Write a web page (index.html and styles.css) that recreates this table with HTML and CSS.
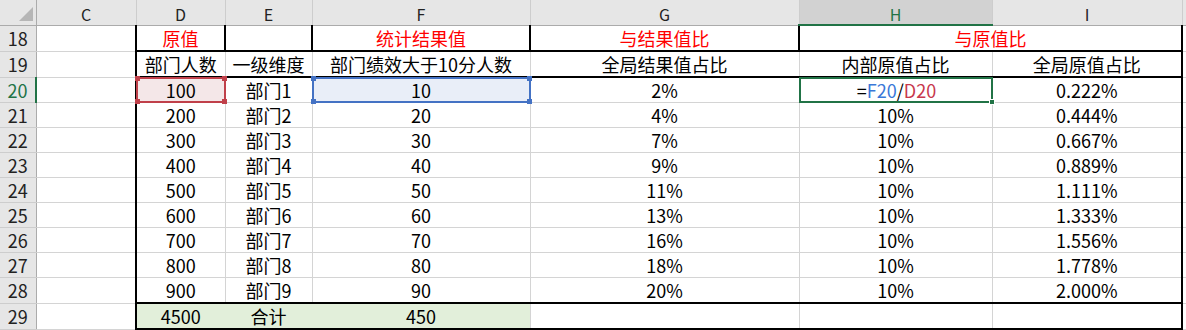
FILE: index.html
```html
<!DOCTYPE html>
<html lang="zh-CN">
<head>
<meta charset="utf-8">
<title>Sheet</title>
<link rel="stylesheet" href="styles.css">
</head>
<body>
<table class="sheet">
  <colgroup>
    <col class="c-rh"><col class="c-c"><col class="c-d"><col class="c-e"><col class="c-f"><col class="c-g"><col class="c-h"><col class="c-i"><col class="c-x">
  </colgroup>
  <thead>
    <tr class="colhdr">
      <th class="corner"><span class="tri"></span></th>
      <th>C</th><th>D</th><th>E</th><th>F</th><th>G</th><th class="active">H</th><th>I</th><th class="edge"></th>
    </tr>
  </thead>
  <tbody>
    <tr>
      <th class="rh">18</th><td></td>
      <td class="red bl br bb">原值</td>
      <td class="br bb"></td>
      <td class="red br bb">统计结果值</td>
      <td class="red br bb">与结果值比</td>
      <td class="red br bb" colspan="2">与原值比</td>
      <td class="edge"></td>
    </tr>
    <tr>
      <th class="rh">19</th><td></td>
      <td class="bl bb">部门人数</td>
      <td class="bb">一级维度</td>
      <td class="bb">部门绩效大于10分人数</td>
      <td class="bb">全局结果值占比</td>
      <td class="bb">内部原值占比</td>
      <td class="bb br">全局原值占比</td>
      <td class="edge"></td>
    </tr>
    <tr>
      <th class="rh cur">20</th><td></td>
      <td class="bl sel-d">100<div class="ref ref-red"><i class="k k-tl"></i><i class="k k-tr"></i><i class="k k-bl"></i><i class="k k-br"></i></div></td>
      <td>部门1</td>
      <td class="sel-f">10<div class="ref ref-blue"><i class="k k-tl"></i><i class="k k-tr"></i><i class="k k-bl"></i><i class="k k-br"></i></div></td>
      <td>2%</td>
      <td class="edit"><span class="fx">=<span class="fb">F20</span>/<span class="fr">D20</span></span><div class="active-box"><i class="fill"></i></div></td>
      <td class="br">0.222%</td>
      <td class="edge"></td>
    </tr>
    <tr><th class="rh">21</th><td></td><td class="bl">200</td><td>部门2</td><td>20</td><td>4%</td><td>10%</td><td class="br">0.444%</td><td class="edge"></td></tr>
    <tr><th class="rh">22</th><td></td><td class="bl">300</td><td>部门3</td><td>30</td><td>7%</td><td>10%</td><td class="br">0.667%</td><td class="edge"></td></tr>
    <tr><th class="rh">23</th><td></td><td class="bl">400</td><td>部门4</td><td>40</td><td>9%</td><td>10%</td><td class="br">0.889%</td><td class="edge"></td></tr>
    <tr><th class="rh">24</th><td></td><td class="bl">500</td><td>部门5</td><td>50</td><td>11%</td><td>10%</td><td class="br">1.111%</td><td class="edge"></td></tr>
    <tr><th class="rh">25</th><td></td><td class="bl">600</td><td>部门6</td><td>60</td><td>13%</td><td>10%</td><td class="br">1.333%</td><td class="edge"></td></tr>
    <tr><th class="rh">26</th><td></td><td class="bl">700</td><td>部门7</td><td>70</td><td>16%</td><td>10%</td><td class="br">1.556%</td><td class="edge"></td></tr>
    <tr><th class="rh">27</th><td></td><td class="bl">800</td><td>部门8</td><td>80</td><td>18%</td><td>10%</td><td class="br">1.778%</td><td class="edge"></td></tr>
    <tr><th class="rh">28</th><td></td><td class="bl bb">900</td><td class="bb">部门9</td><td class="bb">90</td><td class="bb">20%</td><td class="bb">10%</td><td class="bb br">2.000%</td><td class="edge"></td></tr>
    <tr>
      <th class="rh">29</th><td></td>
      <td class="bl bb green gr">4500</td>
      <td class="bb green gr">合计</td>
      <td class="bb green">450</td>
      <td class="bb"></td><td class="bb"></td><td class="bb br"></td>
      <td class="edge"></td>
    </tr>
    <tr class="tail"><th class="rh"></th><td></td><td></td><td></td><td></td><td></td><td></td><td></td><td class="edge"></td></tr>
  </tbody>
</table>
</body>
</html>
```

FILE: styles.css
```css
* { box-sizing: border-box; }
html, body { margin: 0; padding: 0; background: #fff; }
body {
  width: 1186px;
  height: 330px;
  overflow: hidden;
  font-family: "Noto Sans CJK SC", "Liberation Sans", sans-serif;
  font-size: 18px;
  color: #000;
}

.sheet { border-collapse: collapse; table-layout: fixed; width: 1186px; }
.c-rh { width: 36px; }
.c-c { width: 100px; }
.c-d { width: 89px; }
.c-e { width: 87px; }
.c-f { width: 218px; }
.c-g { width: 269px; }
.c-h { width: 193px; }
.c-i { width: 190px; }
.c-x { width: 4px; }

.sheet td, .sheet th {
  padding: 0;
  height: 25px;
  line-height: 24px;
  text-align: center;
  white-space: nowrap;
  font-weight: normal;
}
.sheet td { border: 1px solid #d4d4d4; }

/* column header */
.sheet .colhdr th {
  background: #e6e6e6;
  color: #222;
  font-size: 16px;
  height: 25px;
  padding-top: 5px;
  line-height: 19px;
  border-right: 1px solid #cdcdcd;
  border-bottom: 1px solid #ababab;
}
.sheet .colhdr th.corner { position: relative; border-right: 1px solid #ababab; }
.tri {
  position: absolute;
  right: 3px;
  bottom: 4px;
  width: 0; height: 0;
  border-left: 14px solid transparent;
  border-bottom: 14px solid #b6b6b6;
}
.sheet .colhdr th.active {
  background: #d2d2d2;
  color: #217346;
  border-bottom: 2px solid #217346;
}

/* row header */
.rh {
  background: #e6e6e6;
  color: #222;
  border-right: 1px solid #ababab;
  border-bottom: 1px solid #cdcdcd;
}
.rh.cur { color: #217346; border-right: 2px solid #217346; }

.edge { border-left: 1px solid #d4d4d4; }

/* thick borders */
.sheet td.bl { border-left: 2px solid #000; }
.sheet td.br { border-right: 2px solid #000; }
.sheet td.bb { border-bottom: 2px solid #000; }

.red { color: #ff0000; }
.sheet td.green { background: #e2efda; }
.sheet td.gr { border-right-color: #e2efda; }

/* reference highlights */
.sel-d, .sel-f, .edit { position: relative; }
.sel-d { background: #f4e7e8; }
.sel-f { background: #e9eef8; }
.ref {
  position: absolute;
  left: -1px; top: -1px; right: -1px; bottom: -1px;
  border: 2px solid;
}
.ref-red { border-color: #c0404a; color: #c0404a; }
.ref-blue { border-color: #4472c4; color: #4472c4; }
.k {
  position: absolute;
  width: 5px; height: 5px;
  background: currentColor;
}
.k-tl { left: -3px; top: -3px; }
.k-tr { right: -3px; top: -3px; }
.k-bl { left: -3px; bottom: -3px; }
.k-br { right: -3px; bottom: -3px; }

.edit { text-align: left; }
.fx { padding-left: 2px; }
.fb { color: #3a78d8; }
.fr { color: #c8384d; }
.active-box {
  position: absolute;
  left: -1px; top: -1px; right: -1px; bottom: -1px;
  border: 2px solid #217346;
}
.fill {
  position: absolute;
  right: -4px; bottom: -4px;
  width: 6px; height: 6px;
  background: #217346;
  border: 1px solid #fff;
}
```
